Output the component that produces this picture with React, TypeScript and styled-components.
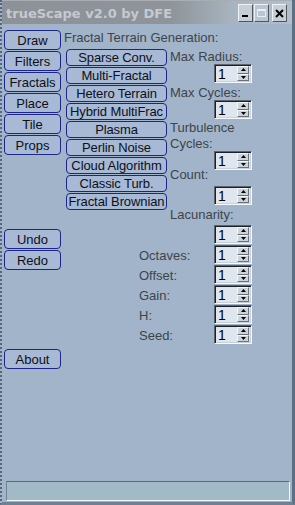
import React from "react";
import styled, { createGlobalStyle } from "styled-components";

const Global = createGlobalStyle`
  html, body { margin: 0; padding: 0; background: #a0b4c8; }
  body { font-family: "Liberation Sans", Arial, sans-serif; }
  * { box-sizing: border-box; }
`;

const Window = styled.div`
  width: 295px;
  height: 505px;
  display: flex;
  flex-direction: column;
  background: #a1b4c9;
  border-left: 2px dotted #55677a;
  border-right: 3px solid #5d6f82;
  border-bottom: 3px solid #6e8094;
  overflow: hidden;
`;

const TitleBar = styled.div`
  height: 24px;
  flex: none;
  display: flex;
  align-items: center;
  padding: 1px 5px 0 4px;
  background: linear-gradient(to right, #8c9297 0%, #8e9499 58%, #a8b4c0 80%, #b2bfcb 100%);
  border-top: 1px solid #a8aeb4;
`;

const Title = styled.div`
  flex: 1;
  font-family: "DejaVu Sans", Verdana, sans-serif;
  font-weight: bold;
  font-size: 13px;
  color: #c3cad1;
  white-space: nowrap;
`;

const TitleButtons = styled.div`
  display: flex;
  gap: 1px;
  align-items: center;
`;

const TitleBtn = styled.div<{ $dim?: boolean; $gap?: number }>`
  width: 15px;
  height: 18px;
  margin-left: ${(p) => p.$gap ?? 0}px;
  display: flex;
  align-items: center;
  justify-content: center;
  background: ${(p) => (p.$dim ? "#b8c6d4" : "#c6ced6")};
  border: 1px solid;
  border-color: #eef2f6 #50585f #50585f #eef2f6;
`;

const Body = styled.div`
  flex: 1;
  display: flex;
  padding: 6px 0 0 2px;
`;

const LeftNav = styled.div`
  width: 57px;
  display: flex;
  flex-direction: column;
  gap: 1px;
`;

const NavButton = styled.div<{ $top?: number }>`
  height: 20px;
  margin-top: ${(p) => p.$top ?? 0}px;
  border: 1px solid #1b2688;
  border-radius: 4px;
  background: #a7b9d4;
  display: flex;
  align-items: center;
  justify-content: center;
  font-size: 13px;
  color: #0c1018;
`;

const Main = styled.div`
  margin-left: 3px;
  display: flex;
  flex-direction: column;
`;

const Header = styled.div`
  font-size: 13px;
  line-height: 16px;
  color: #3e444c;
  white-space: nowrap;
`;

const TopSection = styled.div`
  display: flex;
  margin-top: 3px;
  align-items: flex-start;
`;

const FractalList = styled.div`
  width: 101px;
  margin-left: 2px;
  display: flex;
  flex-direction: column;
  gap: 1px;
`;

const FractalButton = styled.div`
  height: 17px;
  border: 1px solid #1b2688;
  border-radius: 4px;
  background: #a7b9d4;
  display: flex;
  align-items: center;
  justify-content: center;
  font-size: 13px;
  color: #0c1018;
  white-space: nowrap;
  overflow: hidden;
  letter-spacing: -0.1px;
`;

const Params = styled.div`
  margin-left: 3px;
  display: flex;
  flex-direction: column;
  align-items: flex-start;
`;

const ParamLabel = styled.div<{ $top?: number }>`
  margin-top: ${(p) => p.$top ?? 0}px;
  font-size: 13px;
  line-height: 16px;
  color: #3e444c;
  white-space: nowrap;
`;

const SpinBox = styled.div<{ $top?: number; $left?: number }>`
  margin-top: ${(p) => p.$top ?? 0}px;
  margin-left: ${(p) => p.$left ?? 0}px;
  width: 38px;
  height: 19px;
  display: flex;
  border: 1px solid;
  border-color: #5c646c #f4f8fb #f4f8fb #5c646c;
  box-shadow: inset 1px 1px 0 #1c2024, inset -1px -1px 0 #c8d0d8;
  background: #dfe6ed;
  padding: 1px 1px 1px 1px;
`;

const SpinValue = styled.div`
  flex: 1;
  font-size: 14px;
  line-height: 16px;
  padding-left: 2px;
  color: #000;
`;

const SpinArrows = styled.div`
  width: 12px;
  display: flex;
  flex-direction: column;
  margin-right: 1px;
`;

const SpinArrow = styled.div`
  flex: 1;
  display: flex;
  align-items: center;
  justify-content: center;
  background: #cbd3db;
  border: 1px solid;
  border-color: #f4f7fa #6a7178 #6a7178 #f4f7fa;
`;

const BottomRows = styled.div`
  display: flex;
  flex-direction: column;
  gap: 1px;
  margin-top: 1px;
  padding-left: 75px;
`;

const Row = styled.div`
  display: flex;
  align-items: flex-end;
  height: 19px;
`;

const RowLabel = styled.div`
  width: 75px;
  font-size: 13px;
  line-height: 15px;
  color: #3e444c;
  margin-bottom: 1px;
`;

const StatusBar = styled.div`
  flex: none;
  height: 20px;
  margin: 0 2px 1px 4px;
  background: #a2b9c6;
  border: 1px solid;
  border-color: #566d7b #f2f7f9 #f2f7f9 #6f8794;
`;

const Up = () => (
  <svg width="5" height="3" viewBox="0 0 5 3">
    <path d="M2.5 0 L5 3 L0 3 Z" fill="#000" />
  </svg>
);
const Down = () => (
  <svg width="5" height="3" viewBox="0 0 5 3">
    <path d="M0 0 L5 0 L2.5 3 Z" fill="#000" />
  </svg>
);

const Spinner: React.FC<{ top?: number; left?: number }> = ({ top, left }) => (
  <SpinBox $top={top} $left={left}>
    <SpinValue>1</SpinValue>
    <SpinArrows>
      <SpinArrow>
        <Up />
      </SpinArrow>
      <SpinArrow>
        <Down />
      </SpinArrow>
    </SpinArrows>
  </SpinBox>
);

const fractals = [
  "Sparse Conv.",
  "Multi-Fractal",
  "Hetero Terrain",
  "Hybrid MultiFrac",
  "Plasma",
  "Perlin Noise",
  "Cloud Algorithm",
  "Classic Turb.",
  "Fractal Brownian",
];

const navs = ["Draw", "Filters", "Fractals", "Place", "Tile", "Props"];
const rows = ["Octaves:", "Offset:", "Gain:", "H:", "Seed:"];

export default function App() {
  return (
    <>
      <Global />
      <Window>
        <TitleBar>
          <Title>trueScape v2.0 by DFE</Title>
          <TitleButtons>
            <TitleBtn>
              <svg width="9" height="10" viewBox="0 0 9 10">
                <rect x="1" y="7" width="6" height="2" fill="#000" />
              </svg>
            </TitleBtn>
            <TitleBtn $dim>
              <svg width="11" height="10" viewBox="0 0 11 10">
                <rect x="1.5" y="1.5" width="8" height="7" fill="none" stroke="#e8eef4" />
                <rect x="1.5" y="1.5" width="8" height="1.5" fill="#e8eef4" />
              </svg>
            </TitleBtn>
            <TitleBtn $gap={2}>
              <svg width="9" height="9" viewBox="0 0 9 9">
                <path d="M1 1 L8 8 M8 1 L1 8" stroke="#000" strokeWidth="2" />
              </svg>
            </TitleBtn>
          </TitleButtons>
        </TitleBar>
        <Body>
          <LeftNav>
            {navs.map((n) => (
              <NavButton key={n}>{n}</NavButton>
            ))}
            <NavButton $top={73}>Undo</NavButton>
            <NavButton>Redo</NavButton>
            <NavButton $top={78}>About</NavButton>
          </LeftNav>
          <Main>
            <Header>Fractal Terrain Generation:</Header>
            <TopSection>
              <FractalList>
                {fractals.map((f) => (
                  <FractalButton key={f}>{f}</FractalButton>
                ))}
              </FractalList>
              <Params>
                <ParamLabel>Max Radius:</ParamLabel>
                <Spinner left={44} top={-1} />
                <ParamLabel $top={2}>Max Cycles:</ParamLabel>
                <Spinner left={44} top={-1} />
                <ParamLabel $top={1}>
                  Turbulence
                  <br />
                  Cycles:
                </ParamLabel>
                <Spinner left={44} top={-1} />
                <ParamLabel $top={-3}>Count:</ParamLabel>
                <Spinner left={44} top={3} />
                <ParamLabel $top={2}>Lacunarity:</ParamLabel>
                <Spinner left={44} top={2} />
              </Params>
            </TopSection>
            <BottomRows>
              {rows.map((r) => (
                <Row key={r}>
                  <RowLabel>{r}</RowLabel>
                  <Spinner />
                </Row>
              ))}
            </BottomRows>
          </Main>
        </Body>
        <StatusBar />
      </Window>
    </>
  );
}
